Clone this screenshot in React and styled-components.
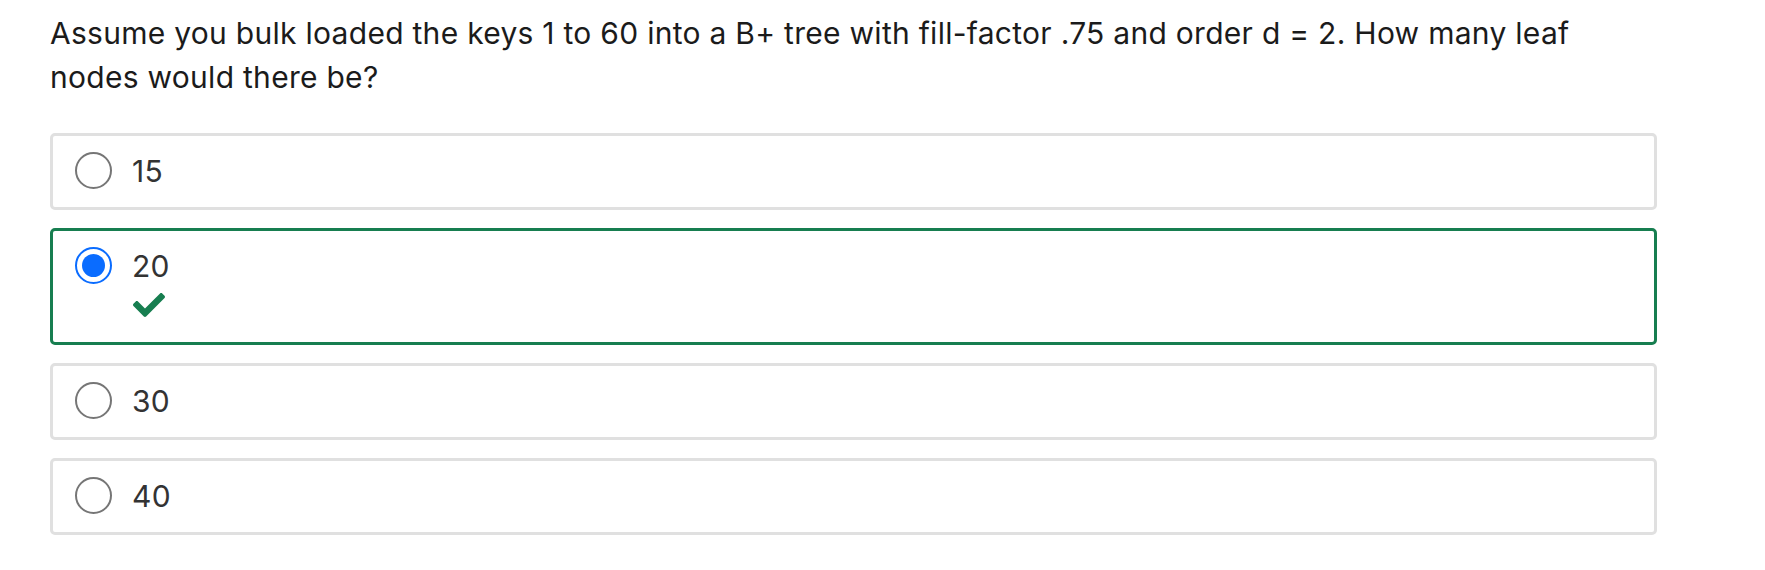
import React from "react";
import styled, { createGlobalStyle } from "styled-components";
import { FaCheck } from "react-icons/fa";

const Global = createGlobalStyle`
  html, body { margin: 0; padding: 0; background: #ffffff; }
  body { font-family: Inter, "Noto Sans", sans-serif; }
`;

const Page = styled.div`
  padding: 11px 108px 0 50px;
`;

const Question = styled.p`
  margin: 0 0 34px 0;
  font-size: 30px;
  line-height: 44px;
  letter-spacing: 0.28px;
  color: #1b1b1b;
  max-width: 1560px;
`;

const Options = styled.div`
  display: flex;
  flex-direction: column;
  gap: 18px;
`;

const Option = styled.label`
  display: flex;
  align-items: flex-start;
  gap: 20px;
  box-sizing: border-box;
  width: 1607px;
  padding: 13px 22px 14px;
  border: 3px solid ${(p) => (p.$correct ? "#177e50" : "#e0e0e0")};
  border-radius: 5px;
  background: #fff;
`;

const Radio = styled.span`
  flex: none;
  box-sizing: border-box;
  width: 37px;
  height: 37px;
  margin-top: 3px;
  border-radius: 50%;
  border: ${(p) => (p.$checked ? "2px solid #0a6cff" : "2px solid #767676")};
  display: flex;
  align-items: center;
  justify-content: center;
  &::after {
    content: "";
    display: ${(p) => (p.$checked ? "block" : "none")};
    width: 23px;
    height: 23px;
    border-radius: 50%;
    background: #0a6cff;
  }
`;

const Body = styled.div`
  display: flex;
  flex-direction: column;
`;

const Label = styled.span`
  font-size: 30px;
  line-height: 44px;
  letter-spacing: 0.28px;
  color: #333333;
`;

const CheckMark = styled.span`
  display: flex;
  color: #177e50;
  margin: 1px 0 7px 1px;
`;

const options = [
  { text: "15" },
  { text: "20", checked: true, correct: true },
  { text: "30" },
  { text: "40" },
];

export default function App() {
  return (
    <Page>
      <Global />
      <Question>
        Assume you bulk loaded the keys 1 to 60 into a B+ tree with fill-factor .75 and order d = 2. How many leaf
        nodes would there be?
      </Question>
      <Options>
        {options.map((o) => (
          <Option key={o.text} $correct={o.correct}>
            <Radio $checked={o.checked} />
            <Body>
              <Label>{o.text}</Label>
              {o.correct && (
                <CheckMark>
                  <FaCheck size={32} />
                </CheckMark>
              )}
            </Body>
          </Option>
        ))}
      </Options>
    </Page>
  );
}
